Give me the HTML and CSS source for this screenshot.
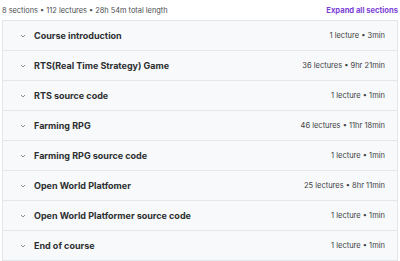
FILE: index.html
```html
<!DOCTYPE html>
<html lang="en">
<head>
  <meta charset="UTF-8" />
  <title>Course content</title>
  <link rel="stylesheet" href="styles.css">
</head>
<body>
  <div class="content">
    <div class="summary">
      <span>8 sections • 112 lectures • 28h 54m total length</span>
      <button class="expand">Expand all sections</button>
    </div>
    <div class="sections">
      <div class="section">
        <span class="chev"><svg width="6" height="4" viewBox="0 0 6 4"><path d="M1 1l2 2 2-2" fill="none" stroke="#8a8f94" stroke-width="1"/></svg></span>
        <span class="title">Course introduction</span>
        <span class="meta">1 lecture • 3min</span>
      </div>
      <div class="section">
        <span class="chev"><svg width="6" height="4" viewBox="0 0 6 4"><path d="M1 1l2 2 2-2" fill="none" stroke="#8a8f94" stroke-width="1"/></svg></span>
        <span class="title">RTS(Real Time Strategy) Game</span>
        <span class="meta">36 lectures • 9hr 21min</span>
      </div>
      <div class="section">
        <span class="chev"><svg width="6" height="4" viewBox="0 0 6 4"><path d="M1 1l2 2 2-2" fill="none" stroke="#8a8f94" stroke-width="1"/></svg></span>
        <span class="title">RTS source code</span>
        <span class="meta">1 lecture • 1min</span>
      </div>
      <div class="section">
        <span class="chev"><svg width="6" height="4" viewBox="0 0 6 4"><path d="M1 1l2 2 2-2" fill="none" stroke="#8a8f94" stroke-width="1"/></svg></span>
        <span class="title">Farming RPG</span>
        <span class="meta">46 lectures • 11hr 18min</span>
      </div>
      <div class="section">
        <span class="chev"><svg width="6" height="4" viewBox="0 0 6 4"><path d="M1 1l2 2 2-2" fill="none" stroke="#8a8f94" stroke-width="1"/></svg></span>
        <span class="title">Farming RPG source code</span>
        <span class="meta">1 lecture • 1min</span>
      </div>
      <div class="section">
        <span class="chev"><svg width="6" height="4" viewBox="0 0 6 4"><path d="M1 1l2 2 2-2" fill="none" stroke="#8a8f94" stroke-width="1"/></svg></span>
        <span class="title">Open World Platfomer</span>
        <span class="meta">25 lectures • 8hr 11min</span>
      </div>
      <div class="section">
        <span class="chev"><svg width="6" height="4" viewBox="0 0 6 4"><path d="M1 1l2 2 2-2" fill="none" stroke="#8a8f94" stroke-width="1"/></svg></span>
        <span class="title">Open World Platformer source code</span>
        <span class="meta">1 lecture • 1min</span>
      </div>
      <div class="section">
        <span class="chev"><svg width="6" height="4" viewBox="0 0 6 4"><path d="M1 1l2 2 2-2" fill="none" stroke="#8a8f94" stroke-width="1"/></svg></span>
        <span class="title">End of course</span>
        <span class="meta">1 lecture • 1min</span>
      </div>
    </div>
  </div>
</body>
</html>
```

FILE: styles.css
```css
body {
  margin: 0;
  padding: 0;
  background: white;
  font-family: Inter, 'Noto Sans', sans-serif;
  color: #2d2f31;
}
.content {
  padding: 1px 2px 0 2px;
}
.summary {
  display: flex;
  justify-content: space-between;
  align-items: center;
  height: 18px;
  font-size: 7.4px;
  color: #4a4d50;
}
.expand {
  background: none;
  border: none;
  padding: 0;
  font-family: inherit;
  font-size: 7.6px;
  font-weight: 700;
  color: #7b3fd6;
}
.sections {
  border: 1px solid #e4e7ea;
  margin-top: 1px;
}
.section {
  display: flex;
  align-items: center;
  height: 29px;
  background: #f7f9fa;
  border-bottom: 1px solid #e4e7ea;
  padding: 0 12px 0 17px;
}
.section:last-child {
  border-bottom: none;
}
.chev {
  display: flex;
  width: 14px;
}
.title {
  flex: 1;
  font-size: 9px;
  font-weight: 700;
}
.meta {
  font-size: 7.5px;
  color: #3e4143;
}
```
